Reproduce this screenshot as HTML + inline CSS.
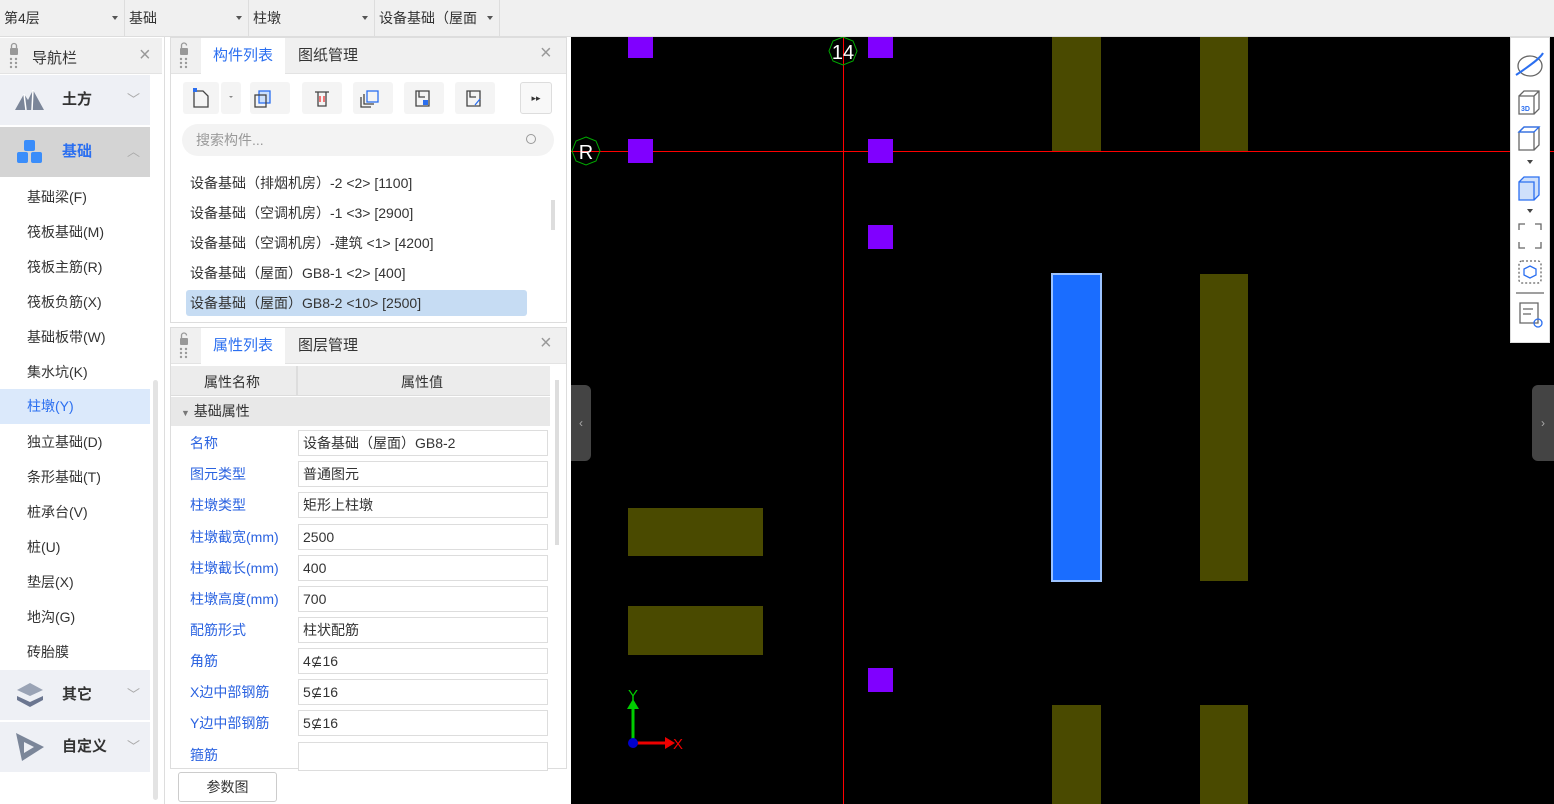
<!DOCTYPE html>
<html><head><meta charset="utf-8"><style>
*{box-sizing:border-box;margin:0;padding:0}
body{width:1554px;height:804px;overflow:hidden;background:#fff;font-family:"Liberation Sans","Noto Sans CJK SC",sans-serif;font-size:14px;color:#333;position:relative}
.a{position:absolute}
.top{left:0;top:0;width:1554px;height:37px;background:#f0f0f0;border-bottom:1px solid #ddd}
.dd{top:0;height:37px;line-height:36px;padding-left:4px;border-right:1px solid #ddd}
.dd i{position:absolute;right:6px;top:16px;border:3px solid transparent;border-top:4px solid #555}
.hdr{background:#f0f0f0;height:36px;border-bottom:1px solid #e3e3e3}
.tab{top:0;height:36px;line-height:36px;padding:0 12px;font-size:15px}
.x{color:#999;font-size:20px;top:4px}
.navi{left:0;width:150px;height:35px;line-height:35px;padding-left:27px;font-size:14px}
.grp{left:0;width:150px;height:50px;line-height:50px;padding-left:62px;font-weight:bold;font-size:15px;background:#eef0f5}
.grp b{position:absolute;right:10px;top:0;color:#aaa;font-weight:normal;font-size:13px}
.li{left:190px;font-size:14px;height:30px;line-height:30px}
.btn{top:82px;width:40px;height:32px;background:#f4f4f4;border-radius:3px}
.row{left:171px;width:380px;height:31px}
.row span{position:absolute;left:19px;top:6px;color:#2b63e0}
.row div{position:absolute;left:127px;top:3px;width:250px;height:26px;border:1px solid #ddd;padding-left:4px;line-height:24px;background:#fff}
.pur{background:#8000ff;width:25px;height:24px}
.ol{background:#4a4a00}
</style></head><body>
<div class="a top"></div>
<div class="a dd" style="left:0;width:125px">第4层<i></i></div>
<div class="a dd" style="left:125px;width:124px">基础<i></i></div>
<div class="a dd" style="left:249px;width:126px">柱墩<i></i></div>
<div class="a dd" style="left:375px;width:125px">设备基础（屋面<i style="right:6px"></i></div>

<!-- nav -->
<div class="a hdr" style="left:0;top:38px;width:162px"></div>
<svg class="a" style="left:8px;top:42px" width="12" height="28"><rect x="2" y="6" width="8" height="7" rx="1" fill="#999"/><path d="M3.5 6V4a2.5 2.5 0 0 1 5 0v2" fill="none" stroke="#999" stroke-width="1.3"/><g fill="#999"><circle cx="3" cy="17" r="1.2"/><circle cx="8" cy="17" r="1.2"/><circle cx="3" cy="21" r="1.2"/><circle cx="8" cy="21" r="1.2"/><circle cx="3" cy="25" r="1.2"/><circle cx="8" cy="25" r="1.2"/></g></svg>
<div class="a" style="left:32px;top:47px;font-size:15px">导航栏</div>
<div class="a x" style="left:139px;top:44px">×</div>
<div class="a grp" style="top:75px">土方<b>﹀</b></div>
<svg class="a" style="left:14px;top:88px" width="32" height="24"><path d="M1 22 L10 6 L14 12 L19 2 L30 22 Z" fill="#7b8699"/><path d="M10 6 L12 22 M19 2 L18 22" stroke="#fff" stroke-width="1.5"/></svg>
<div class="a grp" style="top:127px;background:#d4d4d4;color:#2b6ff0">基础<b>︿</b></div>
<svg class="a" style="left:14px;top:139px" width="32" height="28"><g fill="#3a8dfa"><rect x="10" y="1" width="11" height="11" rx="2"/><rect x="3" y="13" width="11" height="11" rx="2"/><rect x="17" y="13" width="11" height="11" rx="2"/></g></svg>
<div class="a navi" style="top:180px">基础梁(F)</div>
<div class="a navi" style="top:215px">筏板基础(M)</div>
<div class="a navi" style="top:250px">筏板主筋(R)</div>
<div class="a navi" style="top:285px">筏板负筋(X)</div>
<div class="a navi" style="top:320px">基础板带(W)</div>
<div class="a navi" style="top:355px">集水坑(K)</div>
<div class="a navi" style="top:389px;background:#dbe9fb;color:#2b6ff0">柱墩(Y)</div>
<div class="a navi" style="top:425px">独立基础(D)</div>
<div class="a navi" style="top:460px">条形基础(T)</div>
<div class="a navi" style="top:495px">桩承台(V)</div>
<div class="a navi" style="top:530px">桩(U)</div>
<div class="a navi" style="top:565px">垫层(X)</div>
<div class="a navi" style="top:600px">地沟(G)</div>
<div class="a navi" style="top:635px">砖胎膜</div>
<div class="a grp" style="top:670px">其它<b>﹀</b></div>
<svg class="a" style="left:14px;top:681px" width="32" height="28"><path d="M16 2 L29 9 L16 15 L3 9Z" fill="#9aa3b5"/><path d="M3 15 L16 21 L29 15 L29 19 L16 26 L3 19Z" fill="#6b7690"/></svg>
<div class="a grp" style="top:722px">自定义<b>﹀</b></div>
<svg class="a" style="left:14px;top:731px" width="32" height="32"><path d="M2 2 L30 16 L8 30 Z" fill="#7b8699"/><path d="M10 11 L20 16 L10 22Z" fill="#eef0f5"/></svg>
<div class="a" style="left:153px;top:380px;width:5px;height:420px;background:#e3e3e3;border-radius:3px"></div>
<div class="a" style="left:164px;top:37px;width:1px;height:767px;background:#ddd"></div>

<!-- component list panel -->
<div class="a" style="left:170px;top:37px;width:397px;height:286px;border:1px solid #ddd"></div>
<div class="a hdr" style="left:171px;top:38px;width:395px"></div>
<svg class="a" style="left:177px;top:42px" width="14" height="28"><rect x="3" y="6" width="8" height="7" rx="1" fill="#999"/><path d="M4.5 6V3.5a2.5 2.5 0 0 1 5 0" fill="none" stroke="#999" stroke-width="1.3"/><g fill="#999"><circle cx="4" cy="17" r="1.2"/><circle cx="9" cy="17" r="1.2"/><circle cx="4" cy="21" r="1.2"/><circle cx="9" cy="21" r="1.2"/><circle cx="4" cy="25" r="1.2"/><circle cx="9" cy="25" r="1.2"/></g></svg>
<div class="a tab" style="left:201px;top:38px;background:#fff;color:#2b6ff0">构件列表</div>
<div class="a tab" style="left:286px;top:38px">图纸管理</div>
<div class="a x" style="left:540px;top:42px">×</div>
<div class="a btn" style="left:183px;width:36px"></div><div class="a btn" style="left:221px;width:20px"></div>
<div class="a btn" style="left:250px"></div><div class="a btn" style="left:302px"></div><div class="a btn" style="left:353px"></div><div class="a btn" style="left:404px"></div><div class="a btn" style="left:455px"></div>
<div class="a btn" style="left:520px;width:32px;border:1px solid #ddd;background:#f8f8f8;text-align:center;line-height:30px;font-size:9px">▸▸</div>
<svg class="a" style="left:183px;top:82px" width="380" height="32" fill="none" stroke="#444" stroke-width="1.3">
<path d="M11 9h9l5 5v11H11z"/><rect x="10" y="6" width="4" height="4" fill="#2b6ff0" stroke="none"/><path d="M46 14l2 2 2-2z" fill="#888" stroke="none"/><rect x="76" y="9" width="11" height="12" fill="#cde0fb" stroke="#2b6ff0"/><rect x="72" y="13" width="11" height="12"/>
<path d="M132 10h14M135 10v14h8V10" /><path d="M137 14v6M141 14v6" stroke="#e33"/>
<rect x="184" y="9" width="11" height="11" stroke="#2b6ff0"/><path d="M181 12v10h10M178 15v10h10"/>
<path d="M233 9h13v15h-13zM236 9v6h6" /><rect x="240" y="18" width="5" height="5" fill="#2b6ff0" stroke="none"/>
<path d="M284 9h13v15h-13zM287 9v6h6"/><path d="M292 23l5-6" stroke="#2b6ff0"/></svg>
<div class="a" style="left:182px;top:124px;width:372px;height:32px;background:#f3f3f3;border-radius:16px;color:#999;padding-left:14px;line-height:32px">搜索构件...</div>
<div class="a" style="left:526px;top:134px;width:10px;height:10px;border:1.5px solid #999;border-radius:50%"></div>
<div class="a li" style="top:168px">设备基础（排烟机房）-2 &lt;2&gt; [1100]</div>
<div class="a li" style="top:198px">设备基础（空调机房）-1 &lt;3&gt; [2900]</div>
<div class="a li" style="top:228px">设备基础（空调机房）-建筑 &lt;1&gt; [4200]</div>
<div class="a li" style="top:258px">设备基础（屋面）GB8-1 &lt;2&gt; [400]</div>
<div class="a" style="left:186px;top:290px;width:341px;height:26px;background:#c6dcf3;border-radius:3px"></div>
<div class="a li" style="top:288px">设备基础（屋面）GB8-2 &lt;10&gt; [2500]</div>
<div class="a" style="left:551px;top:200px;width:4px;height:30px;background:#ddd"></div>

<!-- properties -->
<div class="a" style="left:170px;top:327px;width:397px;height:442px;border:1px solid #ddd"></div>
<div class="a hdr" style="left:171px;top:328px;width:395px"></div>
<svg class="a" style="left:177px;top:332px" width="14" height="28"><rect x="3" y="6" width="8" height="7" rx="1" fill="#999"/><path d="M4.5 6V3.5a2.5 2.5 0 0 1 5 0" fill="none" stroke="#999" stroke-width="1.3"/><g fill="#999"><circle cx="4" cy="17" r="1.2"/><circle cx="9" cy="17" r="1.2"/><circle cx="4" cy="21" r="1.2"/><circle cx="9" cy="21" r="1.2"/><circle cx="4" cy="25" r="1.2"/><circle cx="9" cy="25" r="1.2"/></g></svg>
<div class="a tab" style="left:201px;top:328px;background:#fff;color:#2b6ff0">属性列表</div>
<div class="a tab" style="left:286px;top:328px">图层管理</div>
<div class="a x" style="left:540px;top:332px">×</div>
<div class="a" style="left:171px;top:366px;width:379px;height:30px;background:#ececec;border-bottom:1px solid #ddd"></div>
<div class="a" style="left:296px;top:366px;width:2px;height:30px;background:#ddd"></div>
<div class="a" style="left:204px;top:372px">属性名称</div>
<div class="a" style="left:401px;top:372px">属性值</div>
<div class="a" style="left:171px;top:397px;width:379px;height:29px;background:#e8e8e8;padding-left:10px;line-height:29px"><span style="font-size:9px;color:#777">▼</span> 基础属性</div>
<div class="a row" style="top:427px"><span>名称</span><div>设备基础（屋面）GB8-2</div></div>
<div class="a row" style="top:458px"><span>图元类型</span><div>普通图元</div></div>
<div class="a row" style="top:489px"><span>柱墩类型</span><div>矩形上柱墩</div></div>
<div class="a row" style="top:521px"><span>柱墩截宽(mm)</span><div>2500</div></div>
<div class="a row" style="top:552px"><span>柱墩截长(mm)</span><div>400</div></div>
<div class="a row" style="top:583px"><span>柱墩高度(mm)</span><div>700</div></div>
<div class="a row" style="top:614px"><span>配筋形式</span><div>柱状配筋</div></div>
<div class="a row" style="top:645px"><span>角筋</span><div>4⊈16</div></div>
<div class="a row" style="top:676px"><span>X边中部钢筋</span><div>5⊈16</div></div>
<div class="a row" style="top:707px"><span>Y边中部钢筋</span><div>5⊈16</div></div>
<div class="a row" style="top:739px"><span>箍筋</span><div style="height:29px"></div></div>
<div class="a" style="left:555px;top:380px;width:4px;height:165px;background:#ddd"></div>
<div class="a" style="left:178px;top:772px;width:99px;height:30px;border:1px solid #ccc;border-radius:3px;text-align:center;line-height:28px">参数图</div>

<!-- canvas -->
<div class="a" style="left:571px;top:37px;width:983px;height:767px;background:#000;overflow:hidden">
<div class="a" style="left:0;top:114px;width:983px;height:1px;background:#f00"></div>
<div class="a" style="left:272px;top:0;width:1px;height:767px;background:#f00"></div>
<div class="a pur" style="left:57px;top:0;height:21px"></div>
<div class="a pur" style="left:297px;top:0;height:21px"></div>
<div class="a pur" style="left:57px;top:102px"></div>
<div class="a pur" style="left:297px;top:102px"></div>
<div class="a pur" style="left:297px;top:188px"></div>
<div class="a pur" style="left:297px;top:631px"></div>
<div class="a ol" style="left:481px;top:0;width:49px;height:114px"></div>
<div class="a ol" style="left:629px;top:0;width:48px;height:114px"></div>
<div class="a ol" style="left:629px;top:237px;width:48px;height:307px"></div>
<div class="a ol" style="left:57px;top:471px;width:135px;height:48px"></div>
<div class="a ol" style="left:57px;top:569px;width:135px;height:49px"></div>
<div class="a ol" style="left:481px;top:668px;width:49px;height:100px"></div>
<div class="a ol" style="left:629px;top:668px;width:48px;height:100px"></div>
<div class="a" style="left:480px;top:236px;width:51px;height:309px;background:#1a6dff;border:2px solid #9cc3ff"></div>
<svg class="a" style="left:0;top:0" width="300" height="140"><polygon points="272,0 282,4 286,14 282,24 272,28 262,24 258,14 262,4" fill="none" stroke="#0a0"/><text x="272" y="22" fill="#fff" font-size="20" text-anchor="middle" font-family="Liberation Sans">14</text><polygon points="15,100 25,104 29,114 25,124 15,128 5,124 1,114 5,104" fill="none" stroke="#0a0"/><text x="15" y="122" fill="#fff" font-size="20" text-anchor="middle" font-family="Liberation Sans">R</text></svg>
<svg class="a" style="left:50px;top:650px" width="70" height="65"><text x="7" y="13" fill="#0c0" font-size="15" font-family="Liberation Sans">Y</text><path d="M12 56V20" stroke="#0c0" stroke-width="3"/><path d="M6 22l6-10 6 10z" fill="#0c0"/><path d="M12 56h34" stroke="#e00" stroke-width="3"/><path d="M44 50l10 6-10 6z" fill="#e00"/><circle cx="12" cy="56" r="5" fill="#00c"/><text x="52" y="62" fill="#e00" font-size="15" font-family="Liberation Sans">X</text></svg>
<div class="a" style="left:0;top:348px;width:20px;height:76px;background:#444;border-radius:0 6px 6px 0;color:#aaa;font-size:12px;line-height:76px;text-align:center">‹</div>
<div class="a" style="left:961px;top:348px;width:22px;height:76px;background:#444;border-radius:6px 0 0 6px;color:#aaa;font-size:12px;line-height:76px;text-align:center">›</div>
</div>
<div class="a" style="left:1510px;top:37px;width:40px;height:306px;background:#fff;border:1px solid #ddd"></div>
<svg class="a" style="left:1510px;top:37px" width="40" height="306" fill="none" stroke="#666" stroke-width="1.3">
<ellipse cx="20" cy="29" rx="12" ry="10"/><path d="M6 38 C15 32 30 22 33 16" stroke="#2b6ff0" stroke-width="2"/>
<path d="M9 59h15v18H9zM9 59l5-5h15v18l-5 5M24 59l5-5"/><text x="11" y="74" fill="#2b6ff0" stroke="none" font-size="7" font-weight="bold" font-family="Liberation Sans">3D</text>
<path d="M9 95h15v18H9zM9 95l5-5h15v18l-5 5" /><path d="M9 95l5-5h15l-5 5z" stroke="#2b6ff0"/>
<path d="M17 123l3 4 3-4z" fill="#444" stroke="none"/>
<path d="M9 145h15v18H9zM9 145l5-5h15v18l-5 5" fill="#cfe0fb" stroke="#2b6ff0"/>
<path d="M17 172l3 4 3-4z" fill="#444" stroke="none"/>
<path d="M9 193v-6h6M25 187h6v6M31 205v6h-6M15 211H9v-6"/>
<rect x="9" y="224" width="22" height="22" rx="3" stroke-dasharray="2 2"/><path d="M20 229l6 3v6l-6 3-6-3v-6z" stroke="#2b6ff0"/>
<path d="M6 256h28"/><path d="M10 266h18v20H10zM13 272h10M13 277h8"/><circle cx="28" cy="286" r="4" stroke="#2b6ff0"/>
</svg>
</body></html>
